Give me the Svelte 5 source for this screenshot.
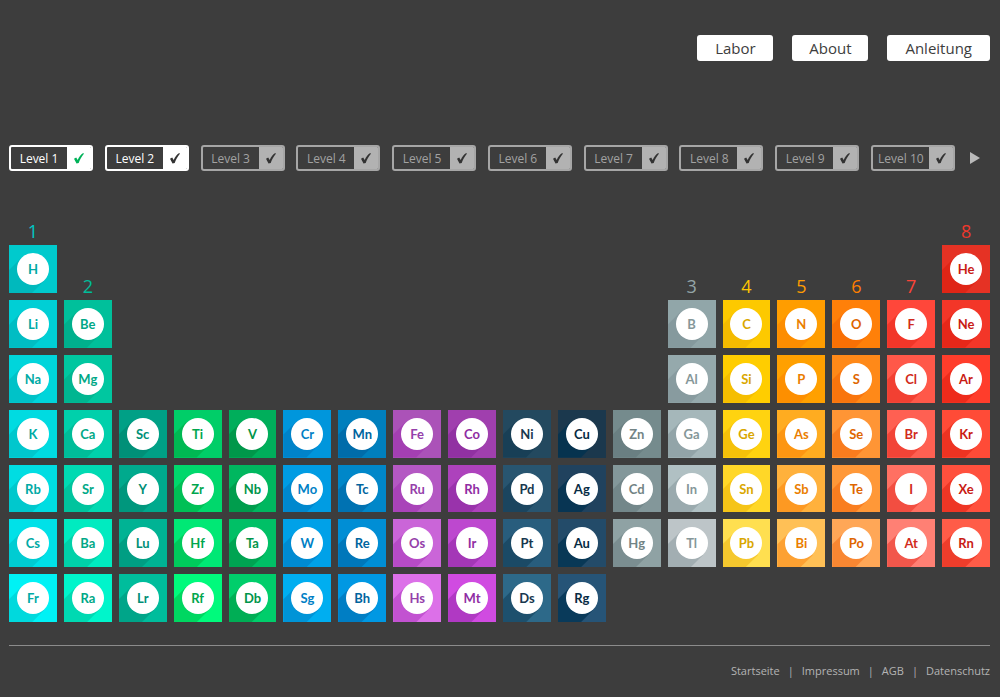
<script>
  const navigation = ['Labor', 'About', 'Anleitung'];
  const footerLinks = ['Startseite', 'Impressum', 'AGB', 'Datenschutz'];

  const levels = Array.from({ length: 10 }, (_, i) => ({
    name: `Level ${i + 1}`,
    state: i === 0 ? 'done' : i === 1 ? 'open' : 'locked'
  }));

  // One entry per table column: first row, symbol colour, shadow overlay, [symbol, tile colour] pairs.
  const columns = [
    { row: 1, label: '1', head: '#00c8c8', ink: '#00aaa5', shade: 'rgba(0,120,125,.2)', cells: [['H', '#00cacd'], ['Li', '#00cfd5'], ['Na', '#00d5db'], ['K', '#00dbe1'], ['Rb', '#00dde2'], ['Cs', '#00e1e8'], ['Fr', '#00f2f5']] },
    { row: 2, label: '2', head: '#00bd9b', ink: '#00a887', shade: 'rgba(0,125,95,.23)', cells: [['Be', '#00c09b'], ['Mg', '#00c7a0'], ['Ca', '#00d0ab'], ['Sr', '#00dab2'], ['Ba', '#00ebc0'], ['Ra', '#00f5cb']] },
    { row: 4, ink: '#008f76', shade: 'rgba(0,95,78,.25)', cells: [['Sc', '#00a086'], ['Y', '#00aa8d'], ['Lu', '#00b394'], ['Lr', '#00bd9c']] },
    { row: 4, ink: '#00a64d', shade: 'rgba(0,135,35,.3)', cells: [['Ti', '#00ce68'], ['Zr', '#00d86c'], ['Hf', '#00e875'], ['Rf', '#00fa7c']] },
    { row: 4, ink: '#00954a', shade: 'rgba(0,100,35,.3)', cells: [['V', '#00ae5b'], ['Nb', '#00b75f'], ['Ta', '#00c066'], ['Db', '#00ce6b']] },
    { row: 4, ink: '#007fc5', shade: 'rgba(0,90,160,.3)', cells: [['Cr', '#0096dc'], ['Mo', '#009ce3'], ['W', '#00a1e8'], ['Sg', '#00aef0']] },
    { row: 4, ink: '#00649e', shade: 'rgba(0,65,125,.3)', cells: [['Mn', '#007fbd'], ['Tc', '#0087c9'], ['Re', '#008ed5'], ['Bh', '#0098e3']] },
    { row: 4, ink: '#9540aa', shade: 'rgba(150,30,170,.36)', cells: [['Fe', '#ab52b8'], ['Ru', '#b458c3'], ['Os', '#ca65d8'], ['Hs', '#dc70e8']] },
    { row: 4, ink: '#8f2da3', shade: 'rgba(120,25,140,.36)', cells: [['Co', '#a03fae'], ['Rh', '#ad42bc'], ['Ir', '#bd48cf'], ['Mt', '#d04be1']] },
    { row: 4, ink: '#18384e', shade: 'rgba(10,50,75,.45)', cells: [['Ni', '#23495f'], ['Pd', '#285570'], ['Pt', '#285d7d'], ['Ds', '#2d6989']] },
    { row: 4, ink: '#072b43', shade: 'rgba(0,50,80,.75)', cells: [['Cu', '#1b384d'], ['Ag', '#20425e'], ['Au', '#234b69'], ['Rg', '#265477']] },
    { row: 4, ink: '#728485', shade: 'rgba(85,105,108,.34)', cells: [['Zn', '#758b8d'], ['Cd', '#83979a'], ['Hg', '#8fa2a4']] },
    { row: 2, label: '3', head: '#94a5a8', ink: '#859799', shade: 'rgba(110,130,135,.34)', cells: [['B', '#91a6a9'], ['Al', '#95a9ac'], ['Ga', '#a5b7ba'], ['In', '#b0c0c3'], ['Tl', '#bdc5c8']] },
    { row: 2, label: '4', head: '#ffc600', ink: '#d9a700', shade: 'rgba(230,170,0,.42)', cells: [['C', '#fdc900'], ['Si', '#ffcd00'], ['Ge', '#ffd310'], ['Sn', '#ffd728'], ['Pb', '#ffdf50']] },
    { row: 2, label: '5', head: '#ff9d00', ink: '#ea7e00', shade: 'rgba(250,120,0,.42)', cells: [['N', '#ff9d00'], ['P', '#ffa000'], ['As', '#ffac20'], ['Sb', '#ffb13c'], ['Bi', '#ffc056']] },
    { row: 2, label: '6', head: '#ff7f00', ink: '#de6600', shade: 'rgba(240,90,0,.42)', cells: [['O', '#ff8009'], ['S', '#ff8918'], ['Se', '#ff9535'], ['Te', '#ff9838'], ['Po', '#ffa757']] },
    { row: 2, label: '7', head: '#fb4438', ink: '#d12b20', shade: 'rgba(225,30,20,.42)', cells: [['F', '#ff473a'], ['Cl', '#ff5849'], ['Br', '#ff6052'], ['I', '#ff7062'], ['At', '#ff8074']] },
    { row: 1, label: '8', head: '#ee382c', ink: '#c91b14', shade: 'rgba(215,20,5,.42)', cells: [['He', '#e53224'], ['Ne', '#f33628'], ['Ar', '#ff3d2b'], ['Kr', '#ff4b37'], ['Xe', '#ff503d'], ['Rn', '#ff5c48']] }
  ];
</script>

<div class="page">
  <header>
    <nav class="top-nav" aria-label="Navigation">
      {#each navigation as item}
        <a href="#{item}">{item}</a>
      {/each}
    </nav>
  </header>

  <main>
    <div class="level-bar">
      <div class="levels">
        {#each levels as level}
          <button class="level {level.state}">
            <span class="level-name">{level.name}</span>
            <span class="level-mark">
              <svg width="12" height="12" viewBox="0 0 12 12" aria-hidden="true">
                <path d="M1 6.800 3.200 5.600 4.700 7.900C6 5 7.700 2.600 10.200 1L10.900 1.700C8.500 4.600 6.900 7.700 5.700 11L3.500 11.500Z" />
              </svg>
            </span>
          </button>
        {/each}
      </div>
      <button class="next" aria-label="›">
        <svg width="10" height="12" viewBox="0 0 10 12" aria-hidden="true">
          <path d="M0 0 10 6 0 12Z" />
        </svg>
      </button>
    </div>

    <div class="table">
      {#each columns as column, c}
        {#if column.label}
          <span class="group" style="grid-area: {column.row} / {c + 1}; color: {column.head}">{column.label}</span>
        {/if}
        {#each column.cells as [symbol, colour], r}
          <button
            class="tile"
            style="grid-area: {column.row + r + 1} / {c + 1}; --tile: {colour}; --shade: {column.shade}; --ink: {column.ink}"
          >
            <span class="disc">{symbol}</span>
          </button>
        {/each}
      {/each}
    </div>
  </main>

  <footer>
    {#each footerLinks as link, i}
      {#if i > 0}<span class="bar">|</span>{/if}
      <a href="#{link}">{link}</a>
    {/each}
  </footer>
</div>

<style>
  :global(body) {
    margin: 0;
    background: #3d3d3d;
  }

  .page {
    padding: 35px 10px 16px 9px;
    font-family: 'Open Sans', 'Noto Sans', sans-serif;
  }

  button {
    margin: 0;
    padding: 0;
    border: 0;
    background: none;
    font: inherit;
    cursor: pointer;
  }

  a {
    color: inherit;
    text-decoration: none;
  }

  .top-nav {
    display: flex;
    justify-content: flex-end;
    gap: 19px;
  }

  .top-nav a {
    box-sizing: border-box;
    min-width: 76px;
    padding: 0 18px;
    border-radius: 3px;
    background: #fff;
    color: #3d3d3d;
    font-size: 15px;
    line-height: 26px;
    text-align: center;
  }

  .top-nav a:not(:last-child) {
    padding: 0 16px;
  }

  .level-bar {
    display: flex;
    align-items: center;
    margin-top: 84px;
  }

  .levels {
    display: flex;
    flex: 1;
    justify-content: space-between;
  }

  .level {
    --line: #b2b2b2;
    display: flex;
    box-sizing: border-box;
    width: 84px;
    height: 26px;
    overflow: hidden;
    border: 2px solid var(--line);
    border-radius: 3px;
    color: #a2a2a2;
    font-size: 12px;
    line-height: 24px;
  }

  .locked {
    border-color: #a6a6a6;
  }

  .done,
  .open {
    --line: #fff;
    color: #fff;
  }

  .level-name {
    flex: 1;
    text-align: center;
    white-space: nowrap;
  }

  .level-mark {
    display: flex;
    align-items: center;
    justify-content: center;
    width: 24px;
    background: var(--line);
  }

  .level-mark svg {
    fill: #333;
  }

  .done .level-mark svg {
    fill: #00b259;
  }

  .next {
    display: flex;
    justify-content: center;
    width: 35px;
    padding-left: 5px;
    fill: #bababa;
  }

  .table {
    display: grid;
    grid-template-columns: repeat(18, minmax(0, 1fr));
    gap: 7px;
    margin-top: 53px;
  }

  .group {
    align-self: end;
    font-size: 18px;
    line-height: 14px;
    text-align: center;
  }

  .tile {
    position: relative;
    display: grid;
    place-items: center;
    aspect-ratio: 1;
    background: var(--tile);
  }

  .tile::before {
    content: '';
    position: absolute;
    inset: 0;
    background: var(--shade);
    clip-path: polygon(26% 26%, 0 52%, 0 100%, 48% 100%, 74% 74%);
  }

  .disc {
    position: relative;
    width: 32px;
    border-radius: 50%;
    background: #fff;
    color: var(--ink);
    font-family: Lato, 'Open Sans', sans-serif;
    font-size: 13px;
    font-weight: 700;
    line-height: 32px;
    text-align: center;
  }

  footer {
    display: flex;
    justify-content: flex-end;
    gap: 8px;
    margin-top: 23px;
    padding-top: 17px;
    border-top: 1px solid #8c8c8c;
    color: #b4b4b4;
    font-size: 11px;
    line-height: 16px;
  }
</style>
